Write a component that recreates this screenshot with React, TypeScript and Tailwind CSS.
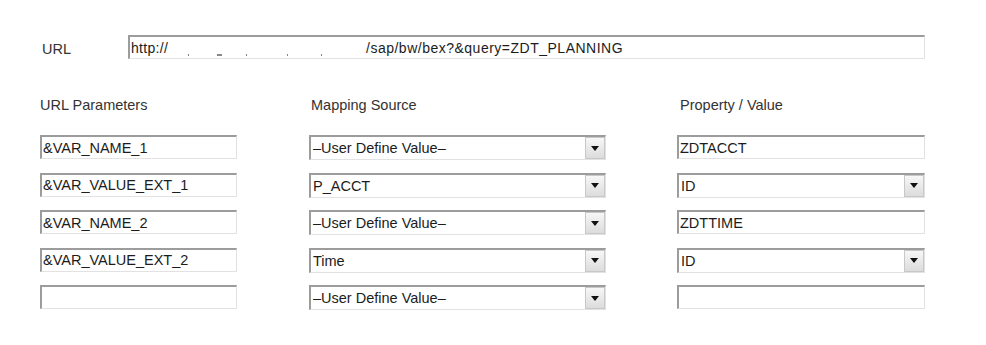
const font = "font-['Liberation_Sans',Arial,sans-serif]";

function Field({ value = "" }: { value?: string }) {
  return (
    <div className="w-[197px] h-[24px] border-t-2 border-l-2 border-t-[#9c9c9c] border-l-[#9c9c9c] border-b border-r border-b-[#e2e2e2] border-r-[#e2e2e2] bg-white flex items-center pl-[1px] pt-[2px] text-[14.5px] text-[#1c1c1c] whitespace-nowrap overflow-hidden">
      {value}
    </div>
  );
}

function WideField({ value = "" }: { value?: string }) {
  return (
    <div className="w-[248px] h-[24px] border-t-2 border-l-2 border-t-[#9c9c9c] border-l-[#9c9c9c] border-b border-r border-b-[#e2e2e2] border-r-[#e2e2e2] bg-white flex items-center pl-[1px] pt-[2px] text-[14.5px] text-[#1c1c1c] whitespace-nowrap overflow-hidden">
      {value}
    </div>
  );
}

function Arrow() {
  return (
    <div className="w-[20px] h-full border border-[#c8c8c8] bg-gradient-to-b from-[#f7f7f7] to-[#dcdcdc] flex items-center justify-center">
      <svg width="8" height="5" viewBox="0 0 8 5">
        <path d="M0 0H8L4 5Z" fill="#111" />
      </svg>
    </div>
  );
}

function Select({ value, width }: { value: string; width: string }) {
  return (
    <div className={`${width} h-[25px] border-t-2 border-l-2 border-t-[#9c9c9c] border-l-[#9c9c9c] border-b border-r border-b-[#e2e2e2] border-r-[#e2e2e2] bg-white flex items-stretch`}>
      <div className="flex-1 flex items-center pl-[2px] pt-[2px] text-[14.5px] text-[#1c1c1c] whitespace-nowrap overflow-hidden">{value}</div>
      <Arrow />
    </div>
  );
}

const rows = [
  { param: "&VAR_NAME_1", source: "–User Define Value–", prop: { kind: "text", value: "ZDTACCT" } },
  { param: "&VAR_VALUE_EXT_1", source: "P_ACCT", prop: { kind: "select", value: "ID" } },
  { param: "&VAR_NAME_2", source: "–User Define Value–", prop: { kind: "text", value: "ZDTTIME" } },
  { param: "&VAR_VALUE_EXT_2", source: "Time", prop: { kind: "select", value: "ID" } },
  { param: "", source: "–User Define Value–", prop: { kind: "text", value: "" } },
];

export default function App() {
  return (
    <div className={`w-[986px] h-[345px] bg-white overflow-hidden ${font}`}>
      <div className="pt-[35px] pl-[42px] flex items-center h-[59px]">
        <div className="w-[86px] text-[14.5px] leading-[16px] text-[#333] pt-[3px]">URL</div>
        <div className="w-[797px] h-[24px] border-t-2 border-l-2 border-t-[#9c9c9c] border-l-[#9c9c9c] border-b border-r border-b-[#e2e2e2] border-r-[#e2e2e2] bg-white flex items-center pl-[1px] pt-[2px] text-[14px] text-[#1c1c1c] whitespace-nowrap overflow-hidden">
          <span className="w-[42px] tracking-[0.3px]">http://</span>
          <span className="self-end mb-[2px] ml-[15px] w-[1px] h-[2px] bg-[#888]" />
          <span className="self-end mb-[2px] ml-[28px] w-[5px] h-[2px] bg-[#888]" />
          <span className="self-end mb-[2px] ml-[24px] w-[1px] h-[2px] bg-[#888]" />
          <span className="self-end mb-[2px] ml-[40px] w-[1px] h-[2px] bg-[#888]" />
          <span className="self-end mb-[2px] ml-[33px] w-[1px] h-[2px] bg-[#888]" />
          <span className="ml-[44px] tracking-[0.5px]">/sap/bw/bex?&amp;query=ZDT_PLANNING</span>
        </div>
      </div>

      <div className="mt-[38px] pl-[40px] grid grid-cols-[269px_368px_248px] text-[14.5px] leading-[16px] text-[#333]">
        <div>URL Parameters</div>
        <div className="pl-[2px]">Mapping Source</div>
        <div className="pl-[3px]">Property / Value</div>
      </div>

      <div className="mt-[22px] pl-[40px] grid grid-cols-[269px_368px_248px] auto-rows-[24px] gap-y-[13.5px] items-start">
        {rows.map((r, i) => (
          <div key={i} className="contents">
            <Field value={r.param} />
            <Select value={r.source} width="w-[297px]" />
            {r.prop.kind === "select" ? (
              <Select value={r.prop.value} width="w-[248px]" />
            ) : (
              <WideField value={r.prop.value} />
            )}
          </div>
        ))}
      </div>
    </div>
  );
}
